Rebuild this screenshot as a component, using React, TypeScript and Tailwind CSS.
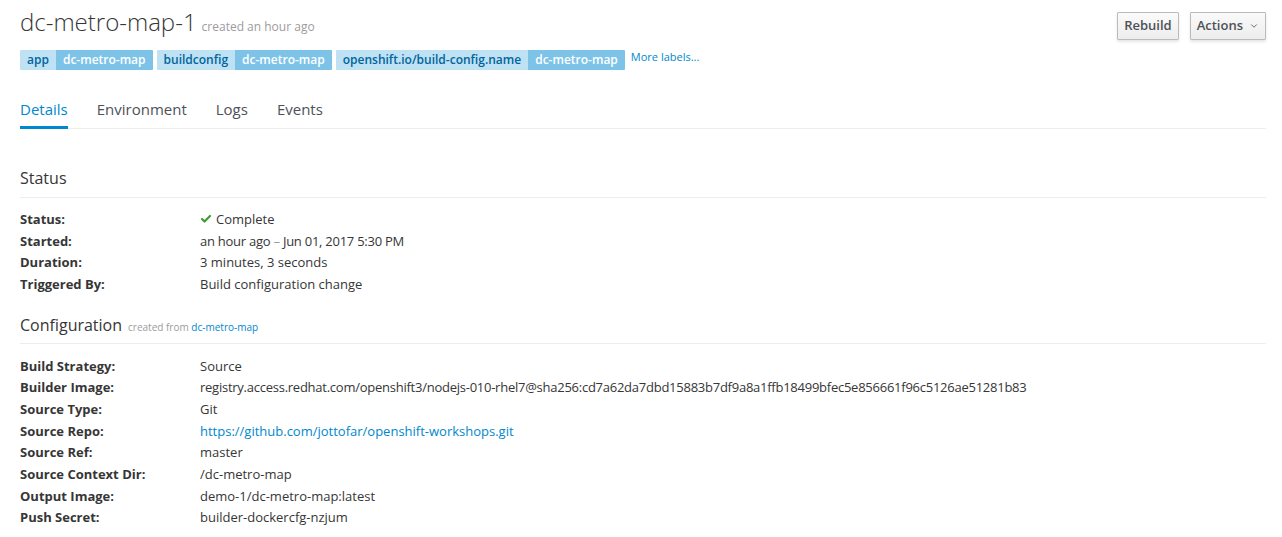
import { Check, ChevronDown } from "lucide-react"

const labels = [
  ["app", "dc-metro-map"],
  ["buildconfig", "dc-metro-map"],
  ["openshift.io/build-config.name", "dc-metro-map"],
]

const tabs = ["Details", "Environment", "Logs", "Events"]

const config: [string, string, boolean?][] = [
  ["Build Strategy:", "Source"],
  ["Builder Image:", "registry.access.redhat.com/openshift3/nodejs-010-rhel7@sha256:cd7a62da7dbd15883b7df9a8a1ffb18499bfec5e856661f96c5126ae51281b83"],
  ["Source Type:", "Git"],
  ["Source Repo:", "https://github.com/jottofar/openshift-workshops.git", true],
  ["Source Ref:", "master"],
  ["Source Context Dir:", "/dc-metro-map"],
  ["Output Image:", "demo-1/dc-metro-map:latest"],
  ["Push Secret:", "builder-dockercfg-nzjum"],
]

function Row({ label, children, tight }: { label: string; children: React.ReactNode; tight?: boolean }) {
  return (
    <div className="flex h-[21.67px] leading-[21.67px]">
      <div className="w-[180px] shrink-0 font-bold text-[#363636]">{label}</div>
      <div className={`text-[#363636] whitespace-nowrap ${tight ? "tracking-[-0.25px]" : ""}`}>{children}</div>
    </div>
  )
}

function Btn({ children }: { children: React.ReactNode }) {
  return (
    <button className="h-[28px] px-[6px] flex items-center gap-1 border border-[#bbbbbb] rounded-[1px] bg-gradient-to-b from-[#fafafa] to-[#ededed] text-[13px] font-semibold text-[#4d5258] shadow-[0_2px_3px_rgba(3,3,3,0.1)]">
      {children}
    </button>
  )
}

export default function App() {
  return (
    <div className="min-h-[537px] bg-white pl-[20px] pr-[16px] text-[13px] text-[#363636]" style={{ fontFamily: '"Open Sans", "Liberation Sans", sans-serif' }}>
      <div className="flex justify-between">
        <div>
          <div className="flex items-baseline gap-[5px] pt-[5px]">
            <h1 className="text-[24px] font-light leading-[34px] text-[#363636]">dc-metro-map-1</h1>
            <span className="text-[12px] text-[#9c9c9c]">created an hour ago</span>
          </div>
          <div className="flex items-center mt-[11px] gap-[4px]">
            {labels.map(([k, v]) => (
              <div key={k} className="flex text-[12px] font-semibold leading-[20px] rounded-[1px] overflow-hidden">
                <span className="bg-[#bee1f4] text-[#00659c] px-[7px]">{k}</span>
                <span className="bg-[#7dc3e8] text-white px-[7px]">{v}</span>
              </div>
            ))}
            <a className="ml-[2px] text-[11px] text-[#0088ce] -mt-[6px]">More labels...</a>
          </div>
        </div>
        <div className="flex gap-[11px] pt-[12px]">
          <Btn>Rebuild</Btn>
          <Btn>
            Actions <ChevronDown size={10} strokeWidth={2} className="ml-[2px]" />
          </Btn>
        </div>
      </div>

      <div className="flex gap-[29px] mt-[27px] border-b border-[#ededed] text-[15px]">
        {tabs.map((t, i) => (
          <div
            key={t}
            className={`leading-[24px] ${i === 0 ? "pb-[4px] text-[#0088ce] border-b-[3px] border-[#0088ce] -mb-[1px]" : "pb-[7px] text-[#4d5258]"}`}
          >
            {t}
          </div>
        ))}
      </div>

      <h2 className="mt-[37px] text-[16px] leading-[24px] text-[#363636] pb-[7px] border-b border-[#ededed]">Status</h2>
      <div className="mt-[11px]">
        <Row label="Status:">
          <Check size={12} strokeWidth={4.5} className="inline-block text-[#3f9c35] align-[-1px] mr-[4px]" />
          Complete
        </Row>
        <Row label="Started:" tight>
          an hour ago <span className="text-[#9c9c9c]">–</span> Jun 01, 2017 5:30 PM
        </Row>
        <Row label="Duration:">3 minutes, 3 seconds</Row>
        <Row label="Triggered By:">Build configuration change</Row>
      </div>

      <h2 className="mt-[17px] flex items-baseline gap-[6px] text-[16px] leading-[24px] text-[#363636] pb-[6px] border-b border-[#ededed]">
        Configuration
        <span className="text-[10px] leading-none text-[#9c9c9c]">
          created from <a className="text-[#0088ce]">dc-metro-map</a>
        </span>
      </h2>
      <div className="mt-[12px]">
        {config.map(([k, v, link]) => (
          <Row key={k} label={k} tight={k === "Builder Image:"}>
            {link ? <a className="text-[#0088ce]">{v}</a> : v}
          </Row>
        ))}
      </div>
    </div>
  )
}
